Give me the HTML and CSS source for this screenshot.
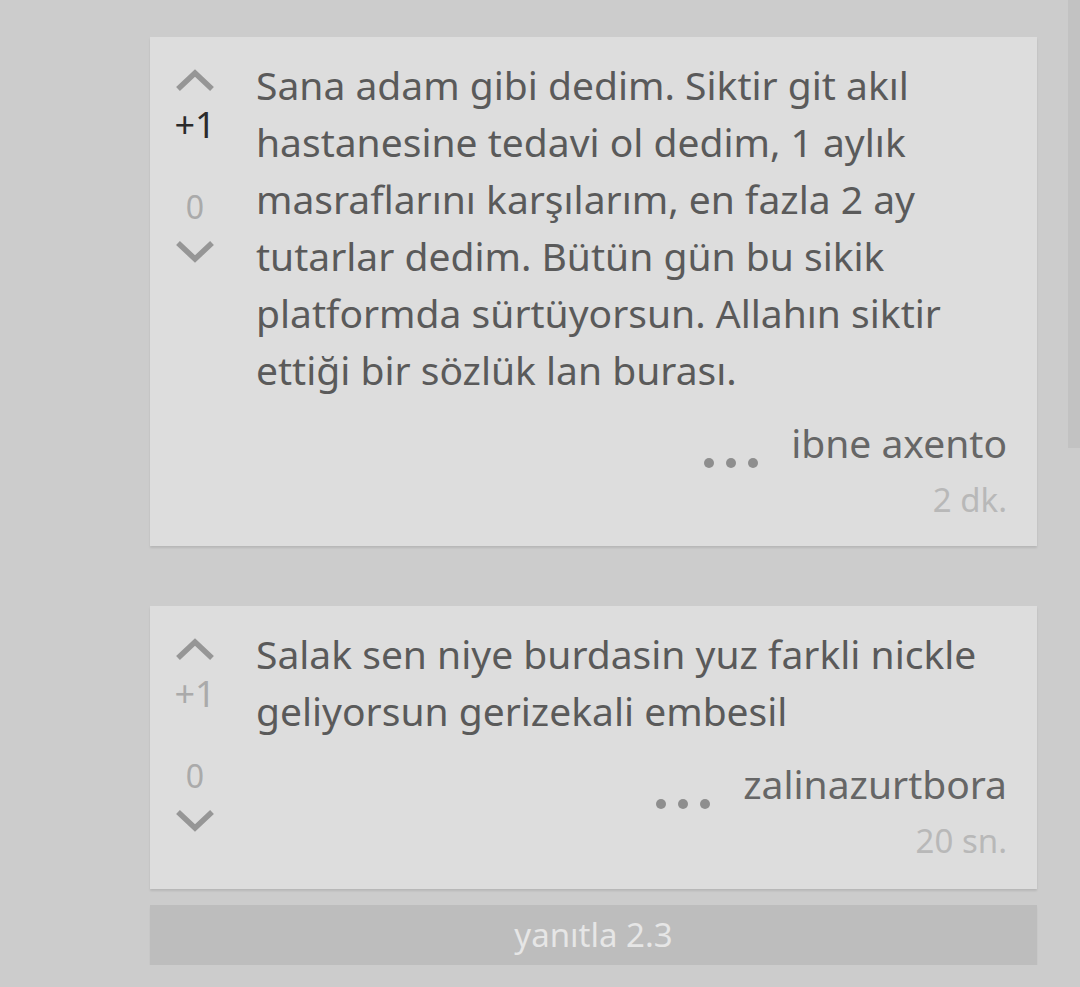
FILE: index.html
```html
<!DOCTYPE html>
<html lang="tr">

<head>
    <meta charset="UTF-8">
    <meta name="viewport" content="width=device-width, initial-scale=1.0">
    <title>Yanıtlar</title>
    <link rel="stylesheet" href="styles.css">
</head>

<body>
    <div class="thread">
        <!-- Entry 1 -->
        <div class="entry">
            <div class="votes">
                <svg class="arrow" viewBox="0 0 40 26"><polyline points="3,22 20,6 37,22" /></svg>
                <div class="score">+1</div>
                <div class="count">0</div>
                <svg class="arrow" viewBox="0 0 40 26"><polyline points="3,4 20,20 37,4" /></svg>
            </div>
            <div class="content">
                <p class="text">Sana adam gibi dedim. Siktir git akıl hastanesine tedavi ol dedim, 1 aylık masraflarını karşılarım, en fazla 2 ay tutarlar dedim. Bütün gün bu sikik platformda sürtüyorsun. Allahın siktir ettiği bir sözlük lan burası.</p>
                <div class="meta">
                    <span class="dots"><i></i><i></i><i></i></span>
                    <span class="author">ibne axento</span>
                </div>
                <div class="time">2 dk.</div>
            </div>
        </div>

        <!-- Entry 2 -->
        <div class="entry">
            <div class="votes">
                <svg class="arrow" viewBox="0 0 40 26"><polyline points="3,22 20,6 37,22" /></svg>
                <div class="score faded">+1</div>
                <div class="count">0</div>
                <svg class="arrow" viewBox="0 0 40 26"><polyline points="3,4 20,20 37,4" /></svg>
            </div>
            <div class="content">
                <p class="text">Salak sen niye burdasin yuz farkli nickle geliyorsun gerizekali embesil</p>
                <div class="meta">
                    <span class="dots"><i></i><i></i><i></i></span>
                    <span class="author">zalinazurtbora</span>
                </div>
                <div class="time">20 sn.</div>
            </div>
        </div>

        <div class="reply">yanıtla 2.3</div>
    </div>

    <div class="scrollbar"></div>
</body>

</html>
```

FILE: styles.css
```css
body {
    margin: 0;
    background: #cccccc;
    font-family: 'Noto Sans', 'Open Sans', sans-serif;
    color: #5a5a5a;
    overflow: hidden;
}

.thread {
    margin-left: 150px;
    width: 887px;
    padding-top: 37px;
}

.entry {
    display: flex;
    background: #dddddd;
    box-shadow: 0 2px 2px rgba(0, 0, 0, 0.1);
    margin-bottom: 60px;
    padding-bottom: 18px;
}

.entry + .entry {
    margin-bottom: 16px;
    padding-bottom: 20px;
}

/* Oy sütunu */
.votes {
    width: 90px;
    flex: none;
    display: flex;
    flex-direction: column;
    align-items: center;
    padding-top: 30px;
}

.arrow {
    width: 40px;
    height: 26px;
    display: block;
}

.arrow polyline {
    fill: none;
    stroke: #969696;
    stroke-width: 5.5;
}

.score {
    font-size: 36px;
    line-height: 40px;
    height: 40px;
    margin-top: 12px;
    color: #2b2b2b;
}

.score.faded {
    color: #aaaaaa;
}

.count {
    font-size: 32px;
    line-height: 40px;
    height: 40px;
    margin-top: 42px;
    color: #aaaaaa;
}

.count + .arrow {
    margin-top: 12px;
}

/* İçerik */
.content {
    flex: 1;
    margin-left: 16px;
    padding-right: 30px;
    padding-top: 19px;
}

.text {
    margin: 0;
    font-size: 39px;
    line-height: 57px;
}

.meta {
    display: flex;
    justify-content: flex-end;
    align-items: flex-start;
    margin-top: 16px;
    line-height: 57px;
}

.author {
    font-size: 39px;
    color: #666666;
}

.dots {
    display: flex;
    gap: 12px;
    margin-right: 33px;
    margin-top: 44px;
}

.dots i {
    width: 10px;
    height: 10px;
    border-radius: 50%;
    background: #8e8e8e;
}

.time {
    text-align: right;
    font-size: 33px;
    line-height: 57px;
    color: #b8b8b8;
}

.reply {
    background: #bdbdbd;
    height: 60px;
    line-height: 60px;
    text-align: center;
    font-size: 33px;
    color: #e6e6e6;
    box-shadow: 0 2px 2px rgba(0, 0, 0, 0.05);
}

.scrollbar {
    position: fixed;
    top: 0;
    right: 0;
    width: 12px;
    height: 448px;
    background: #c2c2c2;
}
```
